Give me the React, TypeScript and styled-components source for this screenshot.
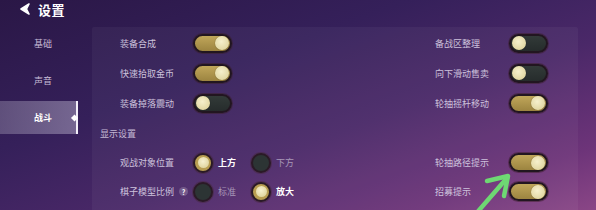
import React from "react";
import styled, { createGlobalStyle } from "styled-components";

const GlobalStyle = createGlobalStyle`
  html, body {
    margin: 0;
    padding: 0;
    background: #2b1848;
    font-family: "Noto Sans CJK SC", "Noto Sans", sans-serif;
  }
`;

type ToggleRow = { label: string; on: boolean };

const leftToggles: ToggleRow[] = [
  { label: "装备合成", on: true },
  { label: "快速拾取金币", on: true },
  { label: "装备掉落震动", on: false },
];

const rightToggles: ToggleRow[] = [
  { label: "备战区整理", on: false },
  { label: "向下滑动售卖", on: false },
  { label: "轮抽摇杆移动", on: true },
];

const Toggle: React.FC<{ on: boolean }> = ({ on }) => (
  <Track $on={on}>
    <Knob />
  </Track>
);

const RadioOption: React.FC<{ label: string; checked: boolean }> = ({ label, checked }) => (
  <Option>
    <RadioCircle $checked={checked}>{checked && <RadioDot />}</RadioCircle>
    <OptionText $checked={checked}>{label}</OptionText>
  </Option>
);

const App: React.FC = () => {
  return (
    <>
      <GlobalStyle />
      <Screen>
        <Header>
          <BackIcon viewBox="0 0 14 14">
            <path d="M11 2 L3 7 L11 12 L8.5 7 Z" />
          </BackIcon>
          <HeaderTitle>设置</HeaderTitle>
        </Header>
        <Body>
          <Sidebar>
            <Tab>基础</Tab>
            <Tab>声音</Tab>
            <Tab $active>战斗</Tab>
          </Sidebar>
          <Panel>
            {leftToggles.map((row, i) => (
              <Row key={row.label} $h={30}>
                <Label>{row.label}</Label>
                <Toggle on={row.on} />
                <Spacer />
                <Label>{rightToggles[i].label}</Label>
                <Toggle on={rightToggles[i].on} />
              </Row>
            ))}
            <SectionTitle>显示设置</SectionTitle>
            <Row $h={29}>
              <Label>观战对象位置</Label>
              <RadioGroup>
                <RadioOption label="上方" checked />
                <RadioOption label="下方" checked={false} />
              </RadioGroup>
              <Label>轮抽路径提示</Label>
              <Toggle on />
            </Row>
            <Row $h={29}>
              <Label>
                棋子模型比例 <Help>?</Help>
              </Label>
              <RadioGroup>
                <RadioOption label="标准" checked={false} />
                <RadioOption label="放大" checked />
              </RadioGroup>
              <Label>招募提示</Label>
              <Toggle on />
            </Row>
          </Panel>
        </Body>
        <Arrow viewBox="0 0 50 50">
          <path d="M4 50 L37 12" />
          <path d="M17 15 L38 10 L34 30" />
        </Arrow>
      </Screen>
    </>
  );
};

export default App;

const Screen = styled.div`
  position: relative;
  width: 596px;
  height: 210px;
  overflow: hidden;
  background: linear-gradient(160deg, #2a1746 0%, #35205a 35%, #4a2868 60%, #6d3479 85%, #8a4686 100%);
`;

const Header = styled.div`
  height: 18px;
  display: flex;
  align-items: center;
  padding-left: 18px;
`;

const BackIcon = styled.svg`
  width: 14px;
  height: 14px;
  fill: #ffffff;
  stroke: #ffffff;
  stroke-width: 1.6;
  stroke-linejoin: round;
  margin-right: 6px;
`;

const HeaderTitle = styled.div`
  color: #ffffff;
  font-size: 13px;
  font-weight: 700;
  letter-spacing: 0.5px;
`;

const Body = styled.div`
  display: flex;
  margin-top: 9px;
  height: 183px;
`;

const Sidebar = styled.div`
  width: 80px;
  display: flex;
  flex-direction: column;
  gap: 4px;
`;

const Tab = styled.div<{ $active?: boolean }>`
  position: relative;
  height: 33px;
  width: 78px;
  box-sizing: border-box;
  padding-left: 10px;
  display: flex;
  align-items: center;
  justify-content: center;
  font-size: 9px;
  color: ${(p) => (p.$active ? "#ffffff" : "#c7bcd6")};
  font-weight: ${(p) => (p.$active ? 700 : 400)};
  background: ${(p) =>
    p.$active ? "linear-gradient(90deg, rgba(150,140,170,0.45), rgba(170,160,190,0.55))" : "transparent"};
  border-right: 2px solid ${(p) => (p.$active ? "#f2eef8" : "transparent")};

  &::after {
    content: "";
    display: ${(p) => (p.$active ? "block" : "none")};
    position: absolute;
    right: -1px;
    top: 50%;
    width: 5px;
    height: 5px;
    background: #ffffff;
    transform: translateY(-50%) rotate(45deg);
  }
`;

const Panel = styled.div`
  margin-left: 12px;
  width: 486px;
  padding: 1px 30px 0 0;
  box-sizing: border-box;
  background: rgba(255, 255, 255, 0.045);
  border-top-left-radius: 2px;
  border-top-right-radius: 2px;
`;

const Row = styled.div<{ $h: number }>`
  height: ${(p) => p.$h}px;
  display: grid;
  grid-template-columns: 73px 39px 203px 74px 39px;
  align-items: center;
  padding-left: 28px;
`;

const Spacer = styled.div``;

const Label = styled.div`
  font-size: 9px;
  color: #cdc2dc;
  white-space: nowrap;
  display: flex;
  align-items: center;
`;

const Help = styled.span`
  display: inline-flex;
  align-items: center;
  justify-content: center;
  width: 9px;
  height: 9px;
  margin-left: 5px;
  border-radius: 50%;
  background: rgba(255, 255, 255, 0.2);
  color: #ffffff;
  font-size: 7px;
  font-weight: 700;
`;

const SectionTitle = styled.div`
  height: 30px;
  display: flex;
  align-items: center;
  padding-left: 8px;
  font-size: 9px;
  color: #c4b8d4;
`;

const Track = styled.div<{ $on: boolean }>`
  width: 39px;
  height: 19px;
  box-sizing: border-box;
  border-radius: 10px;
  border: 2px solid #221620;
  display: flex;
  align-items: center;
  justify-content: ${(p) => (p.$on ? "flex-end" : "flex-start")};
  padding: 0 1px;
  background: ${(p) =>
    p.$on ? "linear-gradient(180deg, #c0a65a 0%, #9c8440 100%)" : "linear-gradient(180deg, #323a38 0%, #262c2c 100%)"};
  box-shadow: 0 0 0 1px rgba(60, 30, 40, 0.5);
`;

const Knob = styled.div`
  width: 14px;
  height: 14px;
  border-radius: 50%;
  background: radial-gradient(circle at 45% 40%, #f6f0cc 0%, #e2d8a4 70%, #c8bb84 100%);
  box-shadow: 0 0 1px rgba(0, 0, 0, 0.6);
`;

const RadioGroup = styled.div`
  grid-column: 2 / span 2;
  display: flex;
`;

const Option = styled.div`
  width: 58px;
  display: flex;
  align-items: center;
`;

const RadioCircle = styled.div<{ $checked: boolean }>`
  width: 20px;
  height: 20px;
  box-sizing: border-box;
  border-radius: 50%;
  border: 2px solid #2a1a26;
  display: flex;
  align-items: center;
  justify-content: center;
  background: ${(p) => (p.$checked ? "#b89e52" : "#2c3434")};
  box-shadow: 0 0 0 1px rgba(70, 40, 60, 0.5);
`;

const RadioDot = styled.div`
  width: 11px;
  height: 11px;
  border-radius: 50%;
  background: radial-gradient(circle at 45% 40%, #f7f1cf 0%, #e0d59f 75%, #c2b47a 100%);
`;

const OptionText = styled.div<{ $checked: boolean }>`
  margin-left: 5px;
  font-size: 9px;
  color: ${(p) => (p.$checked ? "#ffffff" : "#a898b8")};
  font-weight: ${(p) => (p.$checked ? 700 : 400)};
`;

const Arrow = styled.svg`
  position: absolute;
  left: 470px;
  top: 166px;
  width: 50px;
  height: 50px;
  fill: none;
  stroke: #6ed873;
  stroke-width: 4.5;
  stroke-linecap: round;
  stroke-linejoin: round;
`;
